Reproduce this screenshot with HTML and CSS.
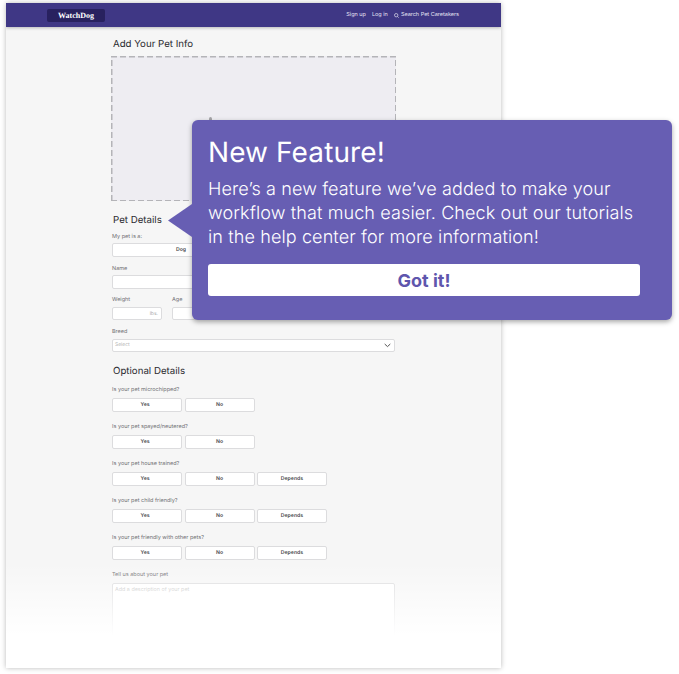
FILE: index.html
```html
<!DOCTYPE html>
<html>
<head>
    <title>WatchDog - Add Your Pet Info</title>
    <link rel="stylesheet" href="styles.css">
</head>
<body>
    <div class="frame">
        <!-- Top navigation -->
        <div class="navbar">
            <div class="logo">WatchDog</div>
            <div class="nav-links">
                <span>Sign up</span>
                <span>Log in</span>
                <span class="nav-search">
                    <svg width="5" height="5" viewBox="0 0 10 10" fill="none" stroke="#e4e2f2" stroke-width="1.4"><circle cx="4.4" cy="4.4" r="3.4"/><path d="M7 7l2.4 2.4"/></svg>
                    Search Pet Caretakers
                </span>
            </div>
        </div>

        <div class="content">
            <h2 class="page-title">Add Your Pet Info</h2>
            <div class="dropzone"><span class="dropzone-mark"></span></div>

            <h2 class="section-title">Pet Details</h2>

            <label class="field-label">My pet is a:</label>
            <div class="choice-row pet-type">
                <div class="choice">Dog</div>
                <div class="choice">Cat</div>
            </div>

            <label class="field-label">Name</label>
            <div class="input"></div>

            <div class="measure-row">
                <div>
                    <label class="field-label">Weight</label>
                    <div class="input input-short">lbs.</div>
                </div>
                <div>
                    <label class="field-label">Age</label>
                    <div class="input input-short">yrs.</div>
                </div>
            </div>

            <label class="field-label">Breed</label>
            <div class="input input-select">
                <span>Select</span>
                <svg width="7" height="5" viewBox="0 0 7 5" fill="none" stroke="#555" stroke-width="1"><path d="M.7 1l2.8 2.6L6.3 1"/></svg>
            </div>

            <h2 class="section-title optional-title">Optional Details</h2>

            <label class="question">Is your pet microchipped?</label>
            <div class="choice-row">
                <div class="choice">Yes</div>
                <div class="choice">No</div>
            </div>

            <label class="question">Is your pet spayed/neutered?</label>
            <div class="choice-row">
                <div class="choice">Yes</div>
                <div class="choice">No</div>
            </div>

            <label class="question">Is your pet house trained?</label>
            <div class="choice-row">
                <div class="choice">Yes</div>
                <div class="choice">No</div>
                <div class="choice">Depends</div>
            </div>

            <label class="question">Is your pet child friendly?</label>
            <div class="choice-row">
                <div class="choice">Yes</div>
                <div class="choice">No</div>
                <div class="choice">Depends</div>
            </div>

            <label class="question">Is your pet friendly with other pets?</label>
            <div class="choice-row">
                <div class="choice">Yes</div>
                <div class="choice">No</div>
                <div class="choice">Depends</div>
            </div>

            <label class="question">Tell us about your pet</label>
            <div class="textarea">Add a description of your pet</div>
        </div>

        <div class="fade"></div>
    </div>

    <!-- Feature popover -->
    <div class="popover">
        <div class="popover-arrow"></div>
        <h1>New Feature!</h1>
        <p>Here’s a new feature we’ve added to make your workflow that much easier. Check out our tutorials in the help center for more information!</p>
        <button>Got it!</button>
    </div>
</body>
</html>
```

FILE: styles.css
```css
body {
    margin: 0;
    height: 674px;
    overflow: hidden;
    background-color: #fff;
    font-family: Inter, "Liberation Sans", sans-serif;
    color: #2b2b30;
    text-rendering: geometricPrecision;
}
.frame {
    position: relative;
    width: 495px;
    height: 665px;
    margin: 3px 0 0 6px;
    overflow: hidden;
    background-color: #f6f6f6;
    box-shadow: 0 0 5px rgba(0, 0, 0, 0.28);
}
.navbar {
    display: flex;
    justify-content: space-between;
    align-items: center;
    height: 24px;
    padding: 0 42px 0 41px;
    background-color: #3f3785;
    box-shadow: 0 1px 3px rgba(0, 0, 0, 0.25);
}
.logo {
    width: 58px;
    height: 13px;
    border-radius: 2px;
    background-color: #28215f;
    color: #fff;
    font-family: "Liberation Serif", serif;
    font-size: 8px;
    font-weight: bold;
    line-height: 13px;
    text-align: center;
}
.nav-links {
    display: flex;
    gap: 6px;
    color: #e4e2f2;
    font-size: 5.5px;
}
.nav-search {
    display: flex;
    align-items: center;
    gap: 2px;
}
.content {
    display: flex;
    flex-direction: column;
    width: 283px;
    padding-left: 106px;
}
.page-title {
    margin: 12px 0 5px 1px;
    font-size: 9.7px;
    font-weight: 400;
    line-height: 12px;
}
.dropzone {
    position: relative;
    box-sizing: border-box;
    width: 285px;
    height: 145px;
    margin-left: -1px;
    background-color: #eeedf2;
    background-image:
        repeating-linear-gradient(90deg, #b4b4b8 0 6px, transparent 6px 9px),
        repeating-linear-gradient(90deg, #b4b4b8 0 6px, transparent 6px 9px),
        repeating-linear-gradient(0deg, #b4b4b8 0 6px, transparent 6px 9px),
        repeating-linear-gradient(0deg, #b4b4b8 0 6px, transparent 6px 9px);
    background-size: 100% 1.5px, 100% 1.5px, 1.5px 100%, 1.5px 100%;
    background-position: top, bottom, left, right;
    background-repeat: no-repeat;
}
.dropzone-mark {
    position: absolute;
    left: 98px;
    top: 61px;
    width: 3px;
    height: 3px;
    border-radius: 2px 2px 0 0;
    background-color: #a5a5a8;
}
.section-title {
    margin: 13.5px 0 7px;
    padding-left: 1px;
    font-size: 9.7px;
    font-weight: 400;
    line-height: 12px;
}
.optional-title {
    margin: 14px 0 8.5px;
}
.field-label,
.question {
    display: block;
    color: #707074;
    font-size: 5.5px;
    line-height: 7px;
}
.field-label {
    margin-bottom: 2.5px;
}
.question {
    margin-bottom: 4.5px;
}
.input,
.choice,
.textarea {
    box-sizing: border-box;
    border: 1px solid #dcdcde;
    border-radius: 2px;
    background-color: #fff;
}
.input {
    height: 13.5px;
    margin-bottom: 8.5px;
}
.input-short {
    width: 50px;
    padding-right: 3px;
    color: #aaa;
    font-size: 5px;
    line-height: 12px;
    text-align: right;
}
.measure-row {
    display: flex;
    gap: 10px;
    margin-bottom: 0.5px;
}
.input-select {
    display: flex;
    justify-content: space-between;
    align-items: center;
    padding: 0 3px 0 2px;
    color: #b5b5b5;
    font-size: 5px;
    margin-bottom: 0;
}
.choice-row {
    display: grid;
    grid-template-columns: repeat(3, 70px);
    gap: 2.5px;
    margin-bottom: 11.5px;
}
.pet-type {
    grid-template-columns: 138px 1fr;
    margin-bottom: 8.5px;
}
.choice {
    height: 14px;
    color: #4a4a4e;
    font-size: 5.2px;
    font-weight: 600;
    line-height: 12px;
    text-align: center;
}
.choice:first-child {
    padding-right: 4px;
}
.pet-type .choice:first-child {
    padding-right: 0;
}
.textarea {
    height: 90px;
    padding: 3px 2px;
    color: #c4c4c4;
    font-size: 5.4px;
}
.fade {
    position: absolute;
    left: 0;
    right: 0;
    top: 560px;
    bottom: 0;
    background: linear-gradient(rgba(255, 255, 255, 0), #fff 72px);
}
.popover {
    position: absolute;
    left: 192px;
    top: 120px;
    box-sizing: border-box;
    width: 480px;
    height: 200px;
    padding: 16px;
    border-radius: 6px;
    background-color: #675eb3;
    box-shadow: 0 2px 5px rgba(0, 0, 0, 0.35);
    color: #fff;
}
.popover-arrow {
    position: absolute;
    left: -24px;
    top: 84px;
    width: 24px;
    height: 33px;
    background-color: #675eb3;
    clip-path: polygon(100% 0, 0 50%, 100% 100%);
}
.popover h1 {
    margin: 0 0 10px;
    font-size: 28px;
    font-weight: 400;
    letter-spacing: 0.1px;
    line-height: 32px;
}
.popover p {
    max-width: 432px;
    margin: 0 0 14px;
    font-size: 18px;
    font-weight: 300;
    letter-spacing: 0.12px;
    line-height: 24px;
}
.popover button {
    display: block;
    width: 432px;
    height: 32px;
    padding: 0;
    border: none;
    border-radius: 3px;
    background-color: #fff;
    color: #5f56ad;
    font-family: inherit;
    font-size: 18px;
    font-weight: 700;
    cursor: pointer;
}
```
